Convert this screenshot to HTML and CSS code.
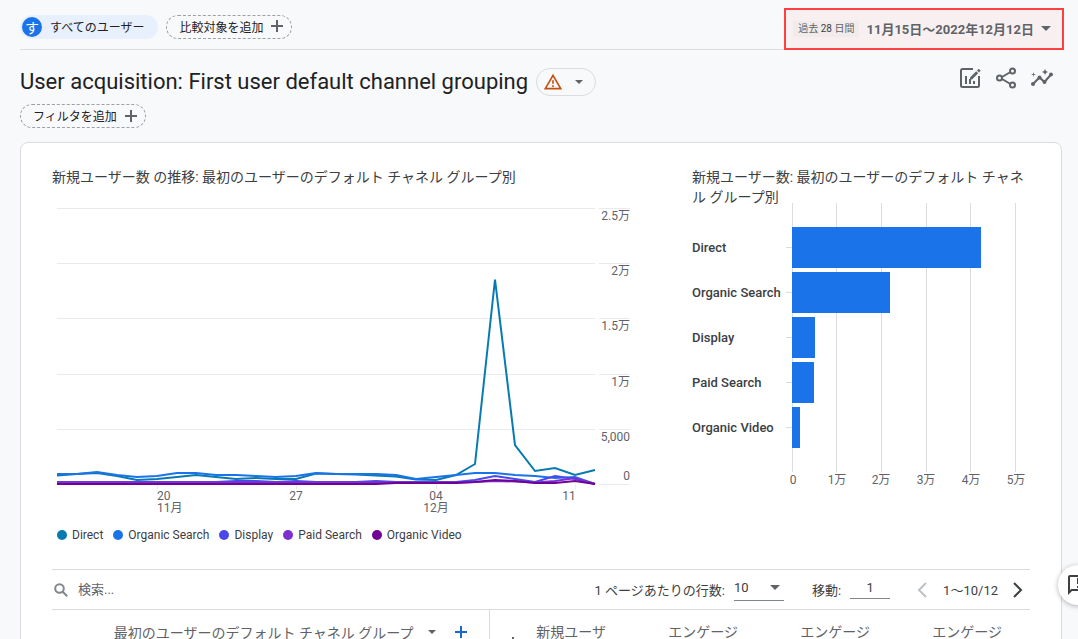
FILE: index.html
```html
<!DOCTYPE html>
<html lang="ja">
<head>
<meta charset="utf-8">
<meta name="viewport" content="width=device-width, initial-scale=1">
<title>User acquisition</title>
<link rel="stylesheet" href="styles.css">
</head>
<body>
<div class="page">
  <header class="topbar">
    <button class="audience" type="button"><span class="audience-badge">す</span>すべてのユーザー</button>
    <button class="chip" type="button">比較対象を追加
      <svg class="chip-plus" viewBox="0 0 12 12" aria-hidden="true"><path d="M6 0v12M0 6h12"/></svg>
    </button>
    <button class="date-range" type="button">
      <span class="date-tag">過去 <b>28</b> 日間</span>
      <span class="date-value">11月15日～2022年12月12日</span>
      <svg class="caret" viewBox="0 0 10 5" aria-hidden="true"><path d="M0 0h10L5 5z"/></svg>
    </button>
  </header>

  <div class="heading">
    <h1>User acquisition: First user default channel grouping</h1>
    <button class="status" type="button" aria-label="データの品質">
      <svg class="warn" viewBox="0 0 24 24" aria-hidden="true"><path d="M12 5.99 19.53 19H4.47L12 5.99M12 2 1 21h22L12 2zm1 14h-2v2h2v-2zm0-6h-2v4h2v-4z"/></svg>
      <svg class="caret-small" viewBox="0 0 10 5" aria-hidden="true"><path d="M0 0h10L5 5z"/></svg>
    </button>
    <div class="actions">
      <button class="icon-button" type="button" aria-label="比較を編集">
        <svg viewBox="0 0 24 24" aria-hidden="true"><path class="line" d="M15 3H4.500A1.500 1.500 0 0 0 3 4.500v15A1.500 1.500 0 0 0 4.500 21h15a1.500 1.500 0 0 0 1.500-1.500V10"/><path d="M7 10h2v8H7zM11 13h2v5h-2zM15 15h2v3h-2z"/><path d="m12 11.500 6.200-6.200 2 2L14 13.500h-2zM19 4.500l1.200-1.200q.5-.5 1 0l1 1q.5.500 0 1L21 6.500z"/></svg>
      </button>
      <button class="icon-button" type="button" aria-label="共有">
        <svg viewBox="0 0 24 24" aria-hidden="true"><path class="line" d="m8 11 8.500-5M8 13l8.500 5"/><circle class="line" cx="5.500" cy="12" r="2.500"/><circle class="line" cx="18.500" cy="5" r="2.500"/><circle class="line" cx="18.500" cy="19" r="2.500"/></svg>
      </button>
      <button class="icon-button" type="button" aria-label="インサイト">
        <svg viewBox="0 0 24 24" aria-hidden="true"><path class="line" d="m3 18 6.500-6.500 5 4.500L21 8.500"/><circle cx="3" cy="18" r="2"/><circle cx="9.500" cy="11.500" r="2"/><circle cx="14.500" cy="16" r="2"/><circle cx="21" cy="8.500" r="2"/><path d="m15 9 .94-2.070L18 6l-2.060-.93L15 3l-.92 2.070L12 6l2.080.93zM3.500 11 4 9l2-.5L4 8l-.5-2L3 8l-2 .5L3 9z"/></svg>
      </button>
    </div>
  </div>

  <div class="filters">
    <button class="chip" type="button">フィルタを追加
      <svg class="chip-plus" viewBox="0 0 12 12" aria-hidden="true"><path d="M6 0v12M0 6h12"/></svg>
    </button>
  </div>

  <main class="card">
    <div class="charts">
      <section class="trend">
        <h2>新規ユーザー数 の推移: 最初のユーザーのデフォルト チャネル グループ別</h2>
        <svg class="trend-plot" viewBox="0 0 578 322" role="img" aria-label="新規ユーザー数の推移">
          <path class="grid" d="M5 11.500h538M547 11.500h31M5 66.500h538M547 66.500h31M5 121.500h538M547 121.500h31M5 177.500h538M547 177.500h31M5 232.500h538M547 232.500h31M547 287.500h31M105.500 287v5M244.500 287v5M384.500 287v5M523.500 287v5"/>
          <g class="axis end">
            <text x="578" y="23">2.5万</text><text x="578" y="78">2万</text><text x="578" y="133">1.5万</text><text x="578" y="189">1万</text><text x="578" y="244">5,000</text><text x="578" y="283">0</text>
          </g>
          <g class="axis">
            <text x="105" y="303">20</text><text x="105" y="315">11月</text>
          </g>
          <g class="axis middle">
            <text x="244" y="303">27</text><text x="384" y="303">04</text><text x="384" y="315">12月</text><text x="517" y="303">11</text>
          </g>
          <g class="series">
            <path class="s-direct" d="M5 278.500 25 277 45 276 65 279 85 283 105 282 125 280 144 278 164 280 184 282 204 281 224 282 244 282 264 276.500 284 277 304 277.500 324 278.500 344 279.500 364 282.500 384 283 404 278 423 267 443 82.500 463 248 483 274 503 271 523 278 543 273"/>
            <path class="s-organic" d="M5 277 25 277 45 275 65 278 85 280 105 279 125 276 144 276 164 278 184 278 204 279 224 280 244 279 264 276 284 277 304 277 324 277 344 278 364 282 384 280 404 278 423 276 443 276 463 278 483 279 503 281 523 280 543 287"/>
            <path class="s-display" d="M5 285H164L184 284 204 284 224 285 244 284 264 285H304L324 284 344 285H404L423 283 443 279 463 282 483 285 503 279 523 282 543 287"/>
            <path class="s-paid" d="M5 285.500H404L423 285 443 284 463 284.500 483 285.500 503 284 523 281 543 287"/>
            <path class="s-video" d="M5 287H324L344 286H404L423 285 443 283 463 284 483 286 503 286 523 284 543 287"/>
          </g>
        </svg>
        <ul class="legend">
          <li><span class="dot direct"></span>Direct</li>
          <li><span class="dot organic"></span>Organic Search</li>
          <li><span class="dot display"></span>Display</li>
          <li><span class="dot paid"></span>Paid Search</li>
          <li><span class="dot video"></span>Organic Video</li>
        </ul>
      </section>

      <section class="ranking">
        <h2>新規ユーザー数: 最初のユーザーのデフォルト チャネル グループ別</h2>
        <svg class="ranking-plot" viewBox="0 0 338 287" role="img" aria-label="新規ユーザー数">
          <path class="grid-strong" d="M100.500 0v269M144.500 0v269M189.500 0v269M234.500 0v269M278.500 0v269M323.500 0v269M94 44.500h6M94 89.500h6M94 134.500h6M94 179.500h6M94 224.500h6"/>
          <g class="bars">
            <rect x="100" y="24" width="189" height="41"/><rect x="100" y="69" width="98" height="41"/><rect x="100" y="114" width="23" height="41"/><rect x="100" y="159" width="22" height="41"/><rect x="100" y="204" width="8" height="41"/>
          </g>
          <g class="names">
            <text x="0" y="49">Direct</text><text x="0" y="94">Organic Search</text><text x="0" y="139">Display</text><text x="0" y="184">Paid Search</text><text x="0" y="229">Organic Video</text>
          </g>
          <g class="axis middle">
            <text x="101" y="281">0</text><text x="145" y="281">1万</text><text x="189" y="281">2万</text><text x="234" y="281">3万</text><text x="279" y="281">4万</text><text x="324" y="281">5万</text>
          </g>
        </svg>
      </section>
    </div>

    <div class="table-tools">
      <label class="search">
        <svg viewBox="0 0 14 14" aria-hidden="true"><circle cx="5.500" cy="5.500" r="4.300"/><path d="m8.700 8.700 4.500 4.500"/></svg>
        <input type="search" placeholder="検索..." aria-label="検索">
      </label>
      <label class="rows" for="rows">1 ページあたりの行数:</label>
      <span class="select-box">
        <select id="rows"><option>10</option><option>25</option></select>
        <svg class="caret" viewBox="0 0 10 5" aria-hidden="true"><path d="M0 0h10L5 5z"/></svg>
      </span>
      <label class="goto" for="goto">移動:</label>
      <input id="goto" class="goto-input" type="text" value="1">
      <button class="pager prev" type="button" aria-label="前へ" disabled><svg viewBox="0 0 24 24" aria-hidden="true"><path d="m16 5-7 7 7 7"/></svg></button>
      <span class="range">1～10/12</span>
      <button class="pager" type="button" aria-label="次へ"><svg viewBox="0 0 24 24" aria-hidden="true"><path d="m8 5 7 7-7 7"/></svg></button>
    </div>

    <table class="data">
      <thead>
        <tr>
          <th class="dimension" scope="col">
            <div class="dimension-head">
              <span>最初のユーザーのデフォルト チャネル グループ</span>
              <svg class="caret-small" viewBox="0 0 10 5" aria-hidden="true"><path d="M0 0h10L5 5z"/></svg>
              <button class="add" type="button" aria-label="ディメンションを追加"><svg viewBox="0 0 12 12" aria-hidden="true"><path d="M6 0v12M0 6h12"/></svg></button>
            </div>
          </th>
          <th class="sorted" scope="col">
            <div class="sorted-head">
              <svg class="sort" viewBox="0 0 12 14" aria-hidden="true"><path d="M6 0v12M1 7l5 5 5-5"/></svg>
              <span>新規ユーザ</span>
            </div>
          </th>
          <th scope="col">エンゲージ</th>
          <th scope="col">エンゲージ</th>
          <th scope="col">エンゲージ</th>
        </tr>
      </thead>
    </table>
  </main>
</div>

<button class="feedback" type="button" aria-label="フィードバック">
  <svg viewBox="0 0 24 24" aria-hidden="true"><path d="M20 2H4c-1.100 0-1.990.9-1.990 2L2 22l4-4h14c1.100 0 2-.9 2-2V4c0-1.100-.9-2-2-2zm0 14H5.170L4 17.170V4h16v12zM11 5h2v6h-2zm0 8h2v2h-2z"/></svg>
</button>
</body>
</html>
```

FILE: styles.css
```css
* {
  box-sizing: border-box;
}

body {
  margin: 0;
  background: #f8f9fb;
  color: #3c4043;
  font-family: Roboto, "Noto Sans CJK JP", sans-serif;
  font-size: 14px;
  font-weight: 400;
}

button,
input,
select {
  margin: 0;
  padding: 0;
  border: 0;
  background: none;
  color: inherit;
  font: inherit;
}

svg {
  display: block;
  flex: none;
}

h1,
h2 {
  margin: 0;
  font-weight: 400;
}

.page {
  display: flex;
  flex-direction: column;
  height: 100vh;
  padding: 0 16px 0 20px;
  overflow: hidden;
}

/* Top bar */

.topbar {
  display: flex;
  flex: none;
  align-items: center;
  gap: 8px;
  height: 50px;
  padding-top: 4px;
  border-bottom: 1px solid #dadce0;
}

.audience {
  display: flex;
  align-items: center;
  gap: 8px;
  height: 24px;
  padding: 0 14px 0 2px;
  border-radius: 12px;
  background: #e8f0fe;
  color: #202124;
  font-size: 12px;
}

.audience-badge {
  display: grid;
  place-items: center;
  width: 20px;
  height: 20px;
  border-radius: 50%;
  background: #1a73e8;
  color: #fff;
  font-size: 14px;
}

.chip {
  display: flex;
  align-items: center;
  gap: 8px;
  height: 24px;
  padding: 0 8px 1px 12px;
  border: 1px dashed #9aa0a6;
  border-radius: 12px;
  color: #202124;
  font-size: 12px;
}

.chip-plus {
  width: 12px;
  height: 12px;
  fill: none;
  stroke: #5f6368;
  stroke-width: 2;
}

.date-range {
  display: flex;
  align-items: center;
  gap: 7px;
  height: 42px;
  margin-left: auto;
  margin-right: -2px;
  margin-top: 4px;
  padding: 0 11px 0 7px;
  border: 2px solid #ff4040;
  background: #f8f0f0;
  color: #5f6368;
}

.date-tag {
  padding: 0 5px;
  background: #f1ebeb;
  font-size: 10px;
  line-height: 16px;
}

.date-tag b {
  color: #3c4043;
  font-weight: 400;
}

.date-value {
  font-size: 13px;
  font-weight: 700;
}

.caret,
.caret-small {
  width: 10px;
  height: 5px;
  fill: #5f6368;
}

.caret-small {
  width: 8px;
  height: 4px;
}

/* Report heading */

.heading {
  display: flex;
  flex: none;
  align-items: center;
  gap: 8px;
  height: 54px;
  padding-top: 10px;
}

.heading h1 {
  color: #202124;
  font-size: 22px;
  line-height: 28px;
  white-space: nowrap;
}

.status {
  display: flex;
  align-items: center;
  gap: 12px;
  height: 28px;
  padding: 0 12px 0 6px;
  border: 1px solid #dadce0;
  border-radius: 14px;
}

.warn {
  width: 20px;
  height: 20px;
  fill: #c5500c;
}

.actions {
  display: flex;
  gap: 12px;
  margin-left: auto;
  padding: 0 8px 8px 0;
}

.icon-button svg {
  width: 24px;
  height: 24px;
  fill: #5f6368;
}

.icon-button .line {
  fill: none;
  stroke: #5f6368;
  stroke-width: 2;
}

.filters {
  display: flex;
  flex: none;
  height: 38px;
}

/* Card */

.card {
  flex: none;
  min-height: 600px;
  padding: 24px 31px;
  border: 1px solid #dadce0;
  border-radius: 8px;
  background: #fff;
}

.charts {
  display: grid;
  grid-template-columns: 1fr 338px;
  gap: 62px;
  padding-bottom: 26px;
}

.charts h2 {
  font-size: 14px;
  line-height: 20px;
}

.trend-plot {
  width: 100%;
  margin-top: 10px;
}

.ranking-plot {
  width: 100%;
  margin-top: -4px;
}

.grid,
.grid-strong {
  fill: none;
  stroke: #e8eaed;
}

.grid-strong {
  stroke: #dadce0;
}

.axis {
  fill: #5f6368;
  font-size: 12px;
}

.end {
  text-anchor: end;
}

.middle {
  text-anchor: middle;
}

.names {
  fill: #3c4043;
  font-size: 13px;
  font-weight: 500;
}

.bars {
  fill: #1a73e8;
}

.series {
  fill: none;
  stroke-width: 2;
}

.s-direct {
  stroke: #077ab0;
}

.s-organic {
  stroke: #1a73e8;
}

.s-display {
  stroke: #4a48e8;
}

.s-paid {
  stroke: #7b30d0;
}

.s-video {
  stroke: #720296;
}

.legend {
  display: flex;
  gap: 10px;
  margin: 8px 0 0;
  padding: 0 0 0 5px;
  list-style: none;
  font-size: 12px;
  line-height: 16px;
}

.legend li {
  display: flex;
  align-items: center;
  gap: 5px;
}

.dot {
  width: 10px;
  height: 10px;
  border-radius: 50%;
}

.direct {
  background: #077ab0;
}

.organic {
  background: #1a73e8;
}

.display {
  background: #4a48e8;
}

.paid {
  background: #7b30d0;
}

.video {
  background: #720296;
}

/* Table toolbar */

.table-tools {
  display: flex;
  align-items: center;
  height: 41px;
  border-top: 1px solid #dadce0;
  border-bottom: 1px solid #dadce0;
  font-size: 13px;
}

.search {
  display: flex;
  flex: 1;
  align-items: center;
  gap: 10px;
  padding-left: 2px;
}

.search svg {
  width: 14px;
  height: 14px;
  fill: none;
  stroke: #80868b;
  stroke-width: 2;
}

.search input {
  flex: 1;
  min-width: 0;
  outline: none;
}

.search input::placeholder {
  color: #5f6368;
  opacity: 1;
}

.rows,
.goto {
  margin-right: 9px;
}

.select-box {
  display: flex;
  align-items: center;
  width: 50px;
  height: 26px;
  margin: 0 28px 4px 0;
  border-bottom: 1px solid #80868b;
}

.select-box select {
  flex: 1;
  min-width: 0;
  appearance: none;
}

.select-box .caret {
  margin-right: 4px;
}

.goto-input {
  width: 40px;
  height: 22px;
  margin: 0 20px 4px 0;
  border-bottom: 1px solid #80868b;
  text-align: center;
}

.pager svg {
  width: 24px;
  height: 24px;
  fill: none;
  stroke: #3c4043;
  stroke-width: 2;
}

.prev svg {
  stroke: #bdc1c6;
}

.range {
  margin: 0 8px 0 9px;
}

/* Table */

.data {
  width: 100%;
  border-collapse: collapse;
  table-layout: fixed;
}

.data th {
  width: 132px;
  height: 42px;
  padding: 0 28px 0 0;
  color: #5f6368;
  font-weight: 400;
  text-align: right;
}

.data .dimension {
  width: auto;
  padding: 2px 22px 0 0;
  border-right: 1px solid #dadce0;
}

.data .sorted {
  width: 145px;
  padding-top: 11px;
  vertical-align: top;
}

.dimension-head {
  display: flex;
  align-items: center;
  justify-content: flex-end;
  gap: 14px;
}

.add {
  margin-left: 5px;
}

.add svg {
  width: 12px;
  height: 12px;
  fill: none;
  stroke: #1967d2;
  stroke-width: 2;
}

.sorted-head {
  display: flex;
  align-items: flex-start;
  justify-content: flex-end;
  gap: 17px;
}

.sort {
  width: 12px;
  height: 14px;
  margin-top: 16px;
  fill: none;
  stroke: #5f6368;
  stroke-width: 2;
}

/* Feedback */

.feedback {
  position: fixed;
  right: -20px;
  bottom: 34px;
  display: grid;
  place-items: center;
  width: 40px;
  height: 40px;
  border-radius: 50%;
  background: #fff;
  box-shadow: 0 1px 5px rgba(60, 64, 67, 0.4);
}

.feedback svg {
  width: 24px;
  height: 24px;
  fill: #3c4043;
}
```
